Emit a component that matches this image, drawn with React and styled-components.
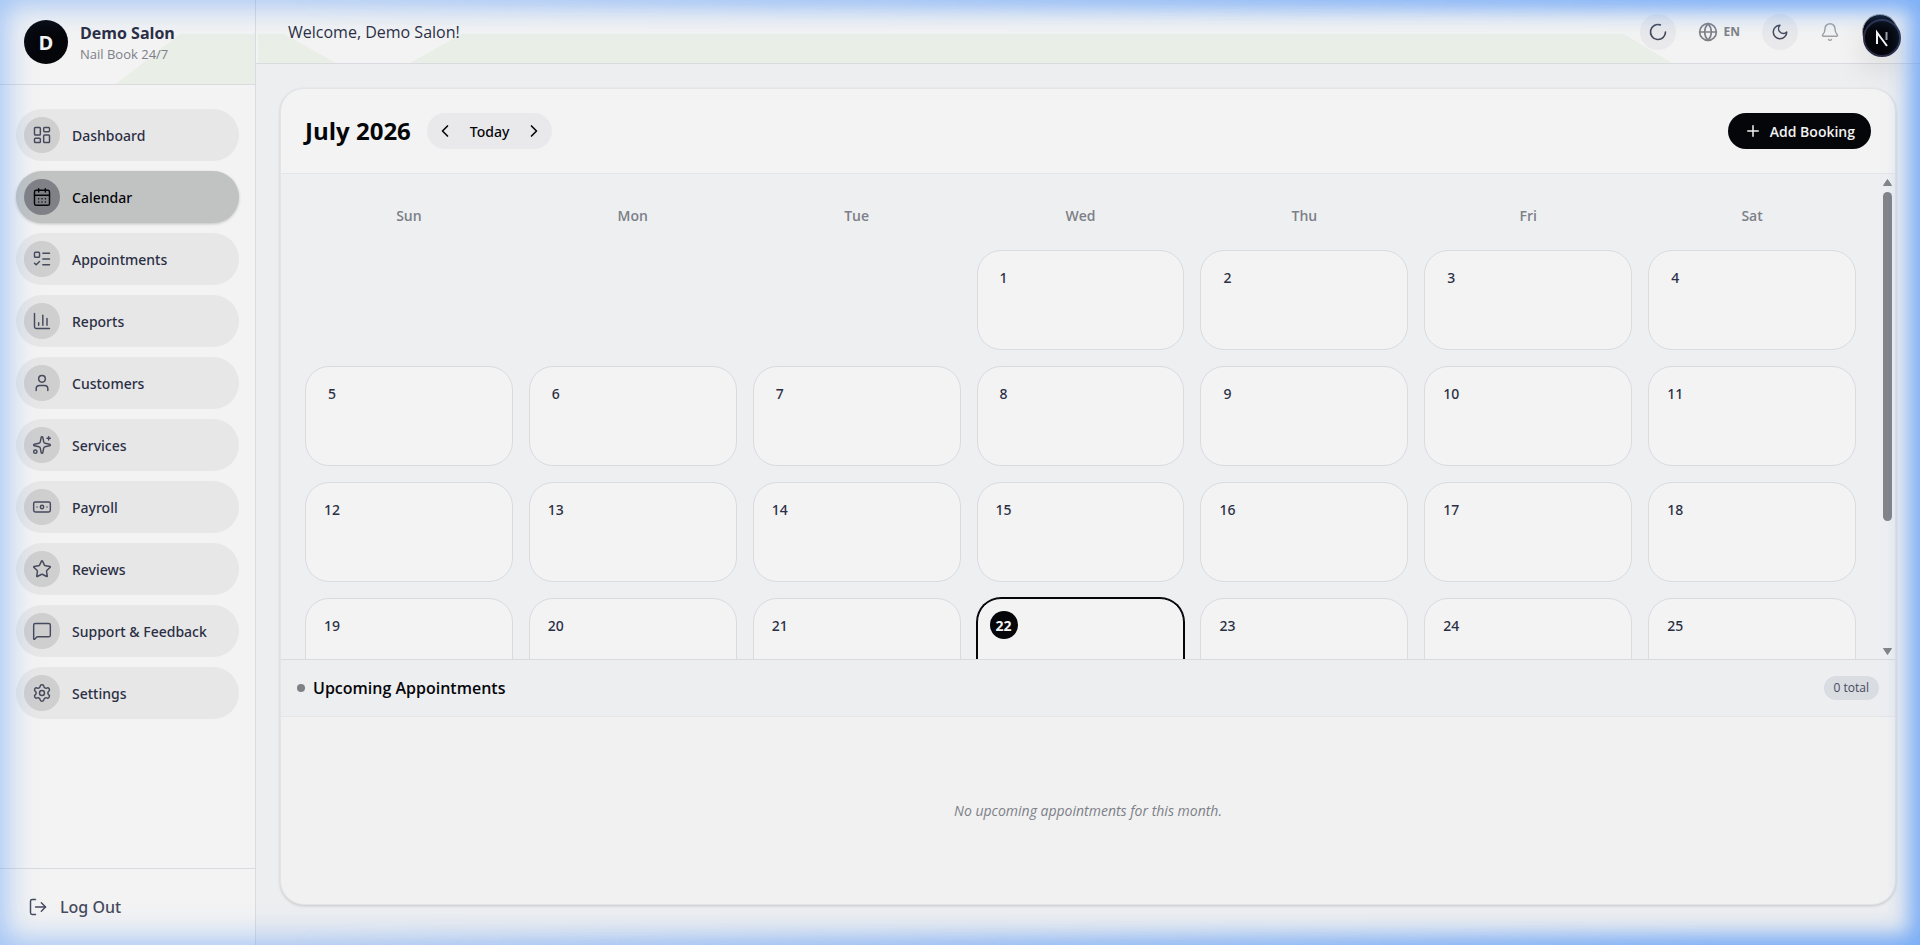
import React from "react";
import styled, { createGlobalStyle, css } from "styled-components";
import {
  LayoutDashboard,
  CalendarDays,
  ListTodo,
  User,
  Sparkles,
  Banknote,
  Star,
  MessageSquare,
  Settings,
  LogOut,
  LoaderCircle,
  Globe,
  Bell,
  ChevronLeft,
  ChevronRight,
  Plus,
} from "lucide-react";

function ReportsIcon({ size, strokeWidth }) {
  return (
    <svg
      width={size}
      height={size}
      viewBox="0 0 24 24"
      fill="none"
      stroke="currentColor"
      strokeWidth={strokeWidth}
      strokeLinecap="round"
      strokeLinejoin="round"
    >
      <path d="M3 3v16a2 2 0 0 0 2 2h16" />
      <path d="M8 17v-3M13 17V5M18 17V9" />
    </svg>
  );
}

function MoonIcon() {
  return (
    <svg
      width="18"
      height="18"
      viewBox="0 0 24 24"
      fill="none"
      stroke="currentColor"
      strokeWidth="2"
      strokeLinecap="round"
      strokeLinejoin="round"
    >
      <path d="M12 3a6 6 0 0 0 9 9 9 9 0 1 1-9-9Z" />
    </svg>
  );
}

const NAV = [
  { label: "Dashboard", icon: LayoutDashboard },
  { label: "Calendar", icon: CalendarDays, active: true },
  { label: "Appointments", icon: ListTodo },
  { label: "Reports", icon: ReportsIcon },
  { label: "Customers", icon: User },
  { label: "Services", icon: Sparkles },
  { label: "Payroll", icon: Banknote },
  { label: "Reviews", icon: Star },
  { label: "Support & Feedback", icon: MessageSquare },
  { label: "Settings", icon: Settings },
];

const WEEKDAYS = ["Sun", "Mon", "Tue", "Wed", "Thu", "Fri", "Sat"];
const OFFSET = 3;
const DAYS = Array.from({ length: 31 }, (_, i) => i + 1);
const TODAY = 22;

function App() {
  return (
    <>
      <GlobalStyle />
      <Shell>
        <Sidebar>
          <Brand>
            <BrandMark>D</BrandMark>
            <div>
              <BrandName>Demo Salon</BrandName>
              <BrandSub>Nail Book 24/7</BrandSub>
            </div>
          </Brand>
          <Nav>
            {NAV.map(({ label, icon: Icon, active }) => (
              <NavItem key={label} href="#" $active={active}>
                <NavIcon $active={active}>
                  <Icon size={20} strokeWidth={1.75} />
                </NavIcon>
                {label}
              </NavItem>
            ))}
          </Nav>
          <SidebarFooter>
            <LogOutButton>
              <LogOut size={20} strokeWidth={1.75} />
              Log Out
            </LogOutButton>
          </SidebarFooter>
        </Sidebar>

        <Content>
          <TopBar>
            <Welcome>Welcome, Demo Salon!</Welcome>
            <Tools>
              <RoundButton aria-label="Refresh">
                <LoaderCircle size={20} strokeWidth={2} />
              </RoundButton>
              <LanguageButton>
                <Globe size={20} strokeWidth={2} />
                EN
              </LanguageButton>
              <RoundButton aria-label="Dark mode">
                <MoonIcon />
              </RoundButton>
              <BellButton aria-label="Notifications">
                <Bell size={20} strokeWidth={1.75} />
              </BellButton>
              <Profile>
                <DevBadge aria-label="Open developer tools">
                  <svg width="38" height="38" viewBox="0 0 38 38" fill="none">
                    <circle cx="19" cy="19" r="18" fill="#05060a" stroke="#2a2c45" strokeWidth="2" />
                    <path d="M14 25V13.500L24 27" stroke="#f4f4f4" strokeWidth="2" />
                    <path d="M23.500 13v8" stroke="#9a9ca4" strokeWidth="2" />
                  </svg>
                </DevBadge>
              </Profile>
            </Tools>
          </TopBar>

          <Main>
            <Card>
              <CardHeader>
                <Month>July 2026</Month>
                <Pager>
                  <PagerButton aria-label="Previous month">
                    <ChevronLeft size={20} strokeWidth={2} />
                  </PagerButton>
                  <TodayButton>Today</TodayButton>
                  <PagerButton aria-label="Next month">
                    <ChevronRight size={20} strokeWidth={2} />
                  </PagerButton>
                </Pager>
                <AddButton>
                  <Plus size={18} strokeWidth={2} />
                  Add Booking
                </AddButton>
              </CardHeader>

              <CalendarArea>
                <CalendarScroll>
                  <Week>
                    {WEEKDAYS.map((day) => (
                      <Weekday key={day}>{day}</Weekday>
                    ))}
                  </Week>
                  <DayGrid>
                    {DAYS.map((day) => (
                      <Day key={day} $first={day === 1} $today={day === TODAY}>
                        <DayNumber $today={day === TODAY}>{day}</DayNumber>
                      </Day>
                    ))}
                  </DayGrid>
                </CalendarScroll>
                <ScrollTrack aria-hidden="true">
                  <svg width="9" height="7" viewBox="0 0 9 7">
                    <path d="M4.500 0.500L8.500 6.500H0.500z" fill="#838488" stroke="#838488" strokeLinejoin="round" />
                  </svg>
                  <ScrollRail>
                    <ScrollThumb />
                  </ScrollRail>
                  <svg width="9" height="7" viewBox="0 0 9 7">
                    <path d="M4.500 6.500L8.500 0.500H0.500z" fill="#838488" stroke="#838488" strokeLinejoin="round" />
                  </svg>
                </ScrollTrack>
              </CalendarArea>

              <UpcomingHeader>
                <Dot />
                <UpcomingTitle>Upcoming Appointments</UpcomingTitle>
                <Total>0 total</Total>
              </UpcomingHeader>
              <UpcomingBody>No upcoming appointments for this month.</UpcomingBody>
            </Card>
          </Main>
        </Content>
      </Shell>
      <Glow />
    </>
  );
}

const GlobalStyle = createGlobalStyle`
  * {
    box-sizing: border-box;
  }

  body {
    margin: 0;
    font-family: "Open Sans", "Noto Sans", sans-serif;
    font-size: 14px;
    color: #2b2f45;
    background: #edeef0;
  }

  button {
    border: none;
    padding: 0;
    background: none;
    font: inherit;
    color: inherit;
    cursor: pointer;
  }

  h1, h2, p {
    margin: 0;
  }
`;

const Shell = styled.div`
  display: flex;
  height: 100vh;
`;

const Sidebar = styled.aside`
  display: flex;
  flex-direction: column;
  flex: 0 0 256px;
  background: #f3f3f3;
  border-right: 1px solid #d9dbe0;
`;

const Brand = styled.div`
  position: relative;
  isolation: isolate;
  display: flex;
  align-items: center;
  gap: 12px;
  height: 85px;
  padding: 0 24px;
  border-bottom: 1px solid #d9dbe0;

  /* pale green facet behind the name */
  &::before {
    content: "";
    position: absolute;
    z-index: -1;
    inset: 34px 0 0 116px;
    background: #e9eee7;
    clip-path: polygon(64px 0, 100% 0, 100% 100%, 0 100%);
  }
`;

const BrandMark = styled.div`
  display: grid;
  place-items: center;
  width: 44px;
  height: 44px;
  border-radius: 50%;
  background: #05060a;
  color: #f3f3f3;
  font-size: 20px;
  font-weight: 700;
`;

const BrandName = styled.div`
  font-size: 16px;
  line-height: 24px;
  font-weight: 700;
`;

const BrandSub = styled.div`
  font-size: 13px;
  line-height: 18px;
  color: #7c8088;
`;

const Nav = styled.nav`
  display: flex;
  flex-direction: column;
  flex: 1;
  gap: 10px;
  padding: 24px 16px;
`;

const NavItem = styled.a`
  display: flex;
  align-items: center;
  gap: 12px;
  height: 52px;
  padding: 0 8px;
  border-radius: 26px;
  font-family: "Noto Sans", sans-serif;
  font-size: 14px;
  font-weight: 500;
  text-decoration: none;
  color: #2b2f45;
  background: #e7e7e7;

  ${({ $active }) =>
    $active &&
    css`
      color: #05060a;
      background: #c1c3c2;
      box-shadow: 0 1px 3px rgba(0, 0, 0, 0.2);
    `}
`;

const NavIcon = styled.span`
  display: grid;
  place-items: center;
  width: 36px;
  height: 36px;
  border-radius: 50%;
  color: ${({ $active }) => ($active ? "#05060a" : "#464a5c")};
  background: ${({ $active }) => ($active ? "#808186" : "#cfcfcf")};
`;

const SidebarFooter = styled.div`
  padding: 16px;
  border-top: 1px solid #d9dbe0;
`;

const LogOutButton = styled.button`
  display: flex;
  align-items: center;
  gap: 12px;
  height: 44px;
  padding: 0 12px;
  font-family: "Noto Sans", sans-serif;
  font-size: 16px;
  font-weight: 500;
  color: #464a5c;
`;

const Content = styled.div`
  display: flex;
  flex-direction: column;
  flex: 1;
  min-width: 0;
`;

const TopBar = styled.header`
  position: relative;
  isolation: isolate;
  display: flex;
  align-items: center;
  justify-content: space-between;
  height: 64px;
  padding: 0 22px 0 32px;
  border-bottom: 1px solid #d9dbe0;
  background: #f3f3f3;

  &::before {
    content: "";
    position: absolute;
    z-index: -1;
    inset: 34px 248px 0 2px;
    background: #e9eee7;
    clip-path: polygon(
      0 0,
      26px 0,
      78px 100%,
      152px 100%,
      204px 0,
      calc(100% - 48px) 0,
      100% 100%,
      0 100%
    );
  }
`;

const Welcome = styled.p`
  font-size: 16px;
  font-weight: 500;
`;

const Tools = styled.div`
  display: flex;
  align-items: center;
  gap: 22px;
`;

const RoundButton = styled.button`
  display: grid;
  place-items: center;
  width: 36px;
  height: 36px;
  border-radius: 50%;
  background: #e9e9eb;
  color: #464a5c;
`;

const LanguageButton = styled.button`
  display: flex;
  align-items: center;
  gap: 6px;
  font-size: 12px;
  font-weight: 700;
  color: #808186;
`;

const BellButton = styled.button`
  display: grid;
  color: #a0a2a6;
`;

const Profile = styled.div`
  position: relative;
  width: 36px;
  height: 36px;
  border-radius: 50%;
  background: #05060a;
  border: 1px solid #a0a2a6;
`;

const DevBadge = styled.button`
  position: absolute;
  top: 4px;
  left: 0;
  display: grid;
  border-radius: 50%;
  box-shadow: 0 12px 32px rgba(0, 0, 0, 0.12);
`;

const Main = styled.main`
  display: flex;
  flex: 1;
  min-height: 0;
  padding: 24px 24px 40px;
`;

const Card = styled.section`
  display: flex;
  flex-direction: column;
  flex: 1;
  min-width: 0;
  overflow: hidden;
  border: 1px solid #e3e4e7;
  border-radius: 24px;
  background: #f1f1f1;
  box-shadow: 0 1px 3px rgba(0, 0, 0, 0.16);
`;

const CardHeader = styled.div`
  display: flex;
  align-items: center;
  gap: 16px;
  padding: 24px;
  border-bottom: 1px solid #e5e6e8;
  background: #f3f3f3;
`;

const Month = styled.h1`
  font-size: 24px;
  line-height: 36px;
  font-weight: 700;
  color: #05060a;
`;

const Pager = styled.div`
  display: flex;
  align-items: center;
  height: 36px;
  border-radius: 18px;
  background: #e9e9eb;
  color: #05060a;
`;

const PagerButton = styled.button`
  display: grid;
  place-items: center;
  width: 36px;
  height: 36px;
`;

const TodayButton = styled.button`
  padding: 0 7px;
  font-family: "Noto Sans", sans-serif;
  font-weight: 500;
`;

const AddButton = styled.button`
  display: flex;
  align-items: center;
  gap: 8px;
  height: 36px;
  margin-left: auto;
  padding: 0 16px;
  border-radius: 18px;
  font-weight: 600;
  color: #f3f3f3;
  background: #05060a;
`;

const CalendarArea = styled.div`
  display: flex;
  flex: 1 1 0;
  min-height: 0;
  background: #eeeff1;
`;

const CalendarScroll = styled.div`
  flex: 1;
  min-width: 0;
  overflow-y: auto;
  padding: 24px;
  scrollbar-width: none;
`;

const Week = styled.div`
  display: grid;
  grid-template-columns: repeat(7, 1fr);
  gap: 16px;
  margin-bottom: 16px;
`;

const Weekday = styled.div`
  padding: 8px 0;
  line-height: 20px;
  font-weight: 600;
  text-align: center;
  color: #7c8088;
`;

const DayGrid = styled.div`
  display: grid;
  grid-template-columns: repeat(7, 1fr);
  gap: 16px;
`;

const Day = styled.div`
  height: 100px;
  padding: 12px;
  border: 1px solid #d9dbe0;
  border-radius: 24px;
  background: #f3f3f3;

  ${({ $first }) =>
    $first &&
    css`
      grid-column-start: ${OFFSET + 1};
    `}

  ${({ $today }) =>
    $today &&
    css`
      border-color: #05060a;
      box-shadow: 0 0 0 1px #05060a;
    `}
`;

const DayNumber = styled.span`
  display: grid;
  place-items: center;
  width: 28px;
  height: 28px;
  border-radius: 50%;
  font-family: "Noto Sans", sans-serif;
  font-weight: ${({ $today }) => ($today ? 700 : 500)};
  color: ${({ $today }) => ($today ? "#f3f3f3" : "#2b2f45")};
  background: ${({ $today }) => ($today ? "#05060a" : "transparent")};
`;

const ScrollTrack = styled.div`
  display: flex;
  flex-direction: column;
  align-items: center;
  width: 15px;
  gap: 6px;
  padding: 5px 0 4px;
`;

const ScrollRail = styled.div`
  flex: 1;
  width: 9px;
`;

const ScrollThumb = styled.div`
  height: 73%;
  border-radius: 5px;
  background: #838488;
`;

const UpcomingHeader = styled.div`
  display: flex;
  align-items: center;
  gap: 8px;
  height: 58px;
  padding: 0 16px;
  border-top: 1px solid #d9dbe0;
  border-bottom: 1px solid #e5e6e8;
  background: #edeef0;
`;

const Dot = styled.span`
  width: 8px;
  height: 8px;
  border-radius: 50%;
  background: #808186;
`;

const UpcomingTitle = styled.h2`
  font-size: 16px;
  font-weight: 600;
  color: #05060a;
`;

const Total = styled.span`
  margin-left: auto;
  padding: 0 10px;
  border-radius: 12px;
  font-size: 12px;
  line-height: 24px;
  font-weight: 500;
  color: #464a5c;
  background: #d9dce1;
`;

const UpcomingBody = styled.p`
  display: grid;
  place-items: center;
  height: 187px;
  font-style: italic;
  color: #7c8088;
`;

// Soft blue light around the window edge, stronger towards the right
const Glow = styled.div`
  position: fixed;
  inset: 0;
  pointer-events: none;
  box-shadow: inset 0 0 30px 5px rgba(80, 150, 250, 0.52);

  &::after {
    content: "";
    position: absolute;
    inset: 0;
    box-shadow: inset 0 0 18px 10px rgba(80, 150, 250, 0.5);
    mask-image: linear-gradient(to right, transparent 15%, black 90%);
  }
`;

export default App;
